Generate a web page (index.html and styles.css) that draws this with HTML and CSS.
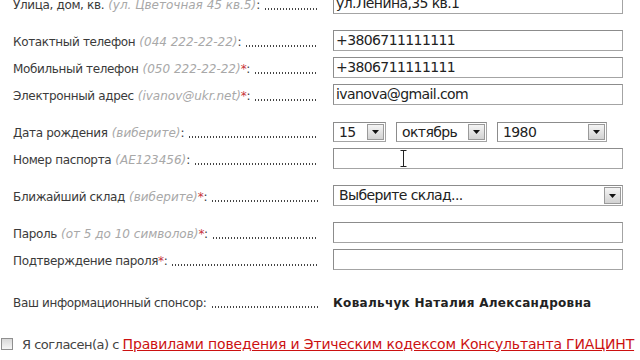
FILE: index.html
```html
<!DOCTYPE html>
<html lang="ru">

<head>
  <meta charset="UTF-8">
  <meta name="viewport" content="width=device-width, initial-scale=1.0">
  <title>Регистрация консультанта</title>
  <link rel="stylesheet" href="styles.css">
</head>

<body>

  <form class="form">
    <div class="row group-end">
      <div class="label">Улица, дом, кв. <i>(ул. Цветочная 45 кв.5)</i>:<span class="lead"></span></div>
      <div class="field">ул.Ленина,35 кв.1</div>
    </div>

    <div class="row">
      <div class="label">Котактный телефон <i>(044 222-22-22)</i>:<span class="lead"></span></div>
      <div class="field">+3806711111111</div>
    </div>
    <div class="row">
      <div class="label">Мобильный телефон <i>(050 222-22-22)</i><b class="req">*</b>:<span class="lead"></span></div>
      <div class="field">+3806711111111</div>
    </div>
    <div class="row group-end">
      <div class="label">Электронный адрес <i>(ivanov@ukr.net)</i><b class="req">*</b>:<span class="lead"></span></div>
      <div class="field">ivanova@gmail.com</div>
    </div>

    <div class="row">
      <div class="label">Дата рождения <i>(виберите)</i>:<span class="lead"></span></div>
      <div class="dates">
        <div class="select day"><span>15</span><span class="arrow"><svg width="7" height="4" viewBox="0 0 7 4"><path d="M0 0h7L3.5 4z" fill="#111"/></svg></span></div>
        <div class="select month"><span>октябрь</span><span class="arrow"><svg width="7" height="4" viewBox="0 0 7 4"><path d="M0 0h7L3.5 4z" fill="#111"/></svg></span></div>
        <div class="select year"><span>1980</span><span class="arrow"><svg width="7" height="4" viewBox="0 0 7 4"><path d="M0 0h7L3.5 4z" fill="#111"/></svg></span></div>
      </div>
    </div>
    <div class="row group-end">
      <div class="label">Номер паспорта <i>(AE123456)</i>:<span class="lead"></span></div>
      <div class="field cursor-host">
        <svg class="ibeam" width="7" height="17" viewBox="0 0 7 17"><path d="M0.5 0.5h6M3.5 0.5v16M0.5 16.5h6" stroke="#222" stroke-width="1" fill="none"/></svg>
      </div>
    </div>

    <div class="row group-end">
      <div class="label">Ближайший склад <i>(виберите)</i><b class="req">*</b>:<span class="lead"></span></div>
      <div class="select"><span>Выберите склад...</span><span class="arrow"><svg width="7" height="4" viewBox="0 0 7 4"><path d="M0 0h7L3.5 4z" fill="#111"/></svg></span></div>
    </div>

    <div class="row">
      <div class="label">Пароль <i>(от 5 до 10 символов)</i><b class="req">*</b>:<span class="lead"></span></div>
      <div class="field"></div>
    </div>
    <div class="row sponsor-gap">
      <div class="label">Подтверждение пароля<b class="req">*</b>:<span class="lead"></span></div>
      <div class="field"></div>
    </div>

    <div class="row agree-gap">
      <div class="label">Ваш информационный спонсор:<span class="lead"></span></div>
      <div class="sponsor">Ковальчук Наталия Александровна</div>
    </div>

    <div class="agree">
      <span class="checkbox"></span>
      <span class="agree-text">Я согласен(а) с <a href="#">Правилами поведения и Этическим кодексом Консультанта ГИАЦИНТ</a></span>
    </div>
  </form>

</body>

</html>
```

FILE: styles.css
```css
* {
  box-sizing: border-box;
}

body {
  font-family: "DejaVu Sans", Verdana, sans-serif;
  background: #fff;
  color: #3a3a3a;
  margin: 0;
  padding: 0;
  overflow: hidden;
}

.form {
  margin-top: -7px;
  white-space: nowrap;
}

.row {
  display: grid;
  grid-template-columns: 310px 290px;
  column-gap: 10px;
  align-items: center;
  height: 21px;
  padding-left: 13px;
  margin-bottom: 6px;
}

.row.group-end {
  margin-bottom: 16px;
}

.row.sponsor-gap {
  margin-bottom: 21px;
}

.row.agree-gap {
  margin-bottom: 21px;
}

.label {
  display: flex;
  align-items: flex-end;
  font-size: 12px;
  line-height: 17px;
  letter-spacing: -0.35px;
  padding-top: 4px;
  padding-right: 5px;
}

.label i {
  color: #a8a8a8;
  margin-left: 4px;
  letter-spacing: 0;
}

.req {
  color: #c8323a;
  font-weight: normal;
}

.lead {
  flex: 1;
  height: 2px;
  margin: 0 0 4px 5px;
  background-image: linear-gradient(to right, #444 1px, transparent 1px);
  background-size: 3px 2px;
  background-repeat: repeat-x;
}

.field {
  position: relative;
  height: 21px;
  border: 1px solid #a4a4a4;
  border-top-color: #8c8c8c;
  border-left-color: #8c8c8c;
  padding: 0 2px;
  font-size: 14px;
  line-height: 19px;
  letter-spacing: -0.6px;
  color: #222;
}

.ibeam {
  position: absolute;
  left: 66px;
  top: 1px;
}

.dates {
  display: flex;
  gap: 10px;
}

.select {
  display: flex;
  justify-content: space-between;
  align-items: stretch;
  height: 21px;
  border: 1px solid #a4a4a4;
  border-top-color: #8c8c8c;
  border-left-color: #8c8c8c;
  padding: 1px 1px 1px 5px;
  font-size: 14px;
  line-height: 17px;
  letter-spacing: -0.6px;
  color: #222;
}

.dates .select {
  height: 20px;
}

.select.day {
  width: 53px;
}

.select.month {
  width: 91px;
}

.select.year {
  width: 110px;
}

.arrow {
  display: flex;
  align-items: center;
  justify-content: center;
  width: 17px;
  border: 1px solid #9a9a9a;
  background: linear-gradient(#f4f4f4, #d2d2d2);
}

.sponsor {
  font-size: 12px;
  font-weight: bold;
  letter-spacing: 0.3px;
  padding-top: 3px;
  color: #222;
}

.agree {
  display: flex;
  align-items: center;
  gap: 9px;
  height: 21px;
  padding-left: 1px;
}

.agree-text {
  font-size: 13px;
  letter-spacing: -0.5px;
  color: #444;
}

.checkbox {
  width: 12px;
  height: 12px;
  border: 1px solid #8f8f8f;
  background: linear-gradient(#d8d8d8, #f6f6f6);
}

.agree a {
  font-size: 14px;
  letter-spacing: -0.15px;
  color: #cc1111;
}
```
